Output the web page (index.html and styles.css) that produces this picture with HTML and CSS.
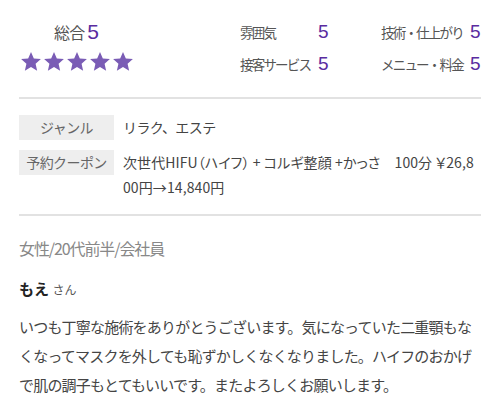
FILE: index.html
```html
<!DOCTYPE html>
<html lang="ja">
<head>
<meta charset="utf-8">
<link rel="stylesheet" href="styles.css">
</head>
<body>
<div class="page">
  <section class="ratings">
    <div class="overall">
      <div class="overall-title"><span class="overall-label">総合</span><span class="overall-num">5</span></div>
      <div class="stars">
        <svg viewBox="0 0 24 24" class="star"><path d="M12 1.5l3.1 7.1 7.7.7-5.8 5.1 1.7 7.6L12 18l-6.7 4 1.7-7.6L1.2 9.3l7.7-.7z"/></svg>
        <svg viewBox="0 0 24 24" class="star"><path d="M12 1.5l3.1 7.1 7.7.7-5.8 5.1 1.7 7.6L12 18l-6.7 4 1.7-7.6L1.2 9.3l7.7-.7z"/></svg>
        <svg viewBox="0 0 24 24" class="star"><path d="M12 1.5l3.1 7.1 7.7.7-5.8 5.1 1.7 7.6L12 18l-6.7 4 1.7-7.6L1.2 9.3l7.7-.7z"/></svg>
        <svg viewBox="0 0 24 24" class="star"><path d="M12 1.5l3.1 7.1 7.7.7-5.8 5.1 1.7 7.6L12 18l-6.7 4 1.7-7.6L1.2 9.3l7.7-.7z"/></svg>
        <svg viewBox="0 0 24 24" class="star"><path d="M12 1.5l3.1 7.1 7.7.7-5.8 5.1 1.7 7.6L12 18l-6.7 4 1.7-7.6L1.2 9.3l7.7-.7z"/></svg>
      </div>
    </div>
    <div class="detail-grid">
      <span class="d-label">雰囲気</span><span class="d-num">5</span>
      <span class="d-label">技術・仕上がり</span><span class="d-num">5</span>
      <span class="d-label">接客サービス</span><span class="d-num">5</span>
      <span class="d-label">メニュー・料金</span><span class="d-num">5</span>
    </div>
  </section>

  <section class="info">
    <div class="info-row">
      <div class="info-label">ジャンル</div>
      <div class="info-value">リラク、エステ</div>
    </div>
    <div class="info-row">
      <div class="info-label">予約クーポン</div>
      <div class="info-value coupon">次世代HIFU（ハイフ） + コルギ整顔 +かっさ　100分 ￥26,800円→14,840円</div>
    </div>
  </section>

  <section class="review">
    <div class="reviewer-meta">女性/20代前半/会社員</div>
    <div class="reviewer-name"><strong>もえ</strong> <span class="san">さん</span></div>
    <p class="review-text">いつも丁寧な施術をありがとうございます。気になっていた二重顎もなくなってマスクを外しても恥ずかしくなくなりました。ハイフのおかげで肌の調子もとてもいいです。またよろしくお願いします。</p>
  </section>
</div>
</body>
</html>
```

FILE: styles.css
```css
html, body {
  margin: 0;
  padding: 0;
  background: #fff;
}

body {
  font-family: "Noto Sans CJK JP", "Noto Sans", sans-serif;
  color: #333;
}

.page {
  padding: 0 19px;
}

.ratings {
  display: flex;
  align-items: flex-start;
  padding: 16px 0 17px;
  border-bottom: 2px solid #e2e2e2;
}

.overall {
  width: 115px;
  margin-top: 4px;
  display: flex;
  flex-direction: column;
  align-items: center;
}

.overall-title {
  display: flex;
  align-items: baseline;
  gap: 3px;
  height: 24px;
  line-height: 24px;
}

.overall-label {
  font-size: 16px;
  letter-spacing: -0.8px;
  color: #555;
}

.overall-num {
  font-family: "Liberation Sans", Arial, sans-serif;
  font-size: 21px;
  color: #5a2ca0;
}

.stars {
  display: flex;
  gap: 1px;
  margin-top: 5px;
}

.star {
  width: 22px;
  height: 25px;
  fill: #7a5cb5;
}

.detail-grid {
  margin-left: 106px;
  display: grid;
  grid-template-columns: 78px 63px 89px auto;
  grid-auto-rows: 32px;
  align-items: center;
}

.d-label {
  font-size: 13.5px;
  letter-spacing: -1.8px;
  white-space: nowrap;
  color: #555;
}

.d-num {
  font-family: "Liberation Sans", Arial, sans-serif;
  font-size: 19px;
  color: #5a2ca0;
}

.info {
  padding: 16px 0 14px;
  border-bottom: 2px solid #e2e2e2;
  display: flex;
  flex-direction: column;
  gap: 10px;
}

.info-row {
  display: flex;
  align-items: flex-start;
  gap: 9px;
}

.info-label {
  flex: 0 0 95px;
  background: #eeeeee;
  color: #666;
  text-align: center;
  font-size: 14px;
  letter-spacing: -0.6px;
  line-height: 25px;
}

.info-value {
  flex: 1;
  font-size: 14px;
  letter-spacing: -0.6px;
  line-height: 25px;
  color: #444;
}

.coupon {
  word-break: break-all;
  font-feature-settings: "palt";
  letter-spacing: 0.1px;
}

.review {
  padding-top: 20px;
}

.reviewer-meta {
  font-size: 16px;
  letter-spacing: -1.1px;
  line-height: 24px;
  color: #888;
}

.reviewer-name {
  margin-top: 17px;
  line-height: 24px;
  font-size: 15px;
  color: #222;
}

.reviewer-name strong {
  font-weight: 700;
}

.san {
  font-size: 12px;
  color: #555;
}

.review-text {
  margin: 10px 0 0;
  font-size: 15px;
  letter-spacing: -0.8px;
  line-height: 29px;
  color: #444;
}
```
